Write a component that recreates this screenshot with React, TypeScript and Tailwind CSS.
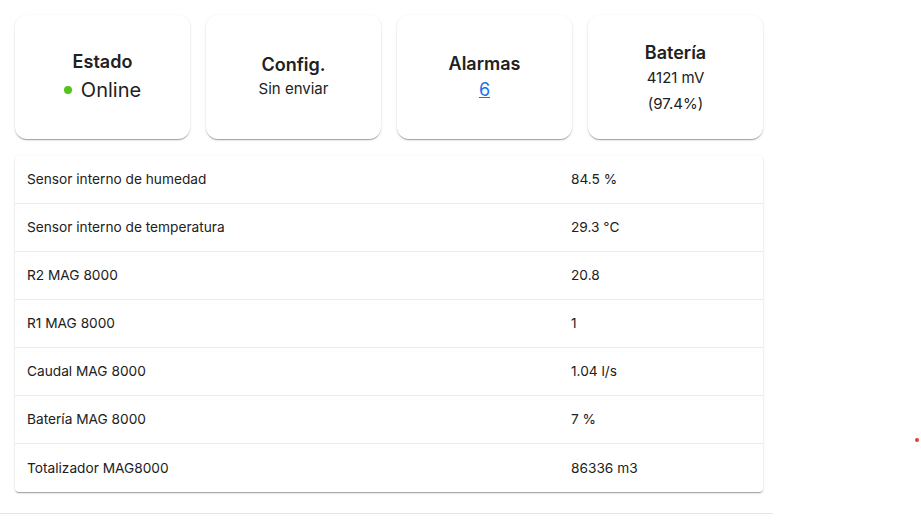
import React from "react";

const rows: [string, string][] = [
  ["Sensor interno de humedad", "84.5 %"],
  ["Sensor interno de temperatura", "29.3 °C"],
  ["R2 MAG 8000", "20.8"],
  ["R1 MAG 8000", "1"],
  ["Caudal MAG 8000", "1.04 l/s"],
  ["Batería MAG 8000", "7 %"],
  ["Totalizador MAG8000", "86336 m3"],
];

const card =
  "w-[175px] h-[124px] bg-white rounded-xl flex flex-col items-center justify-center shadow-[0_2px_1px_-1px_rgba(0,0,0,0.2),0_1px_1px_0_rgba(0,0,0,0.14),0_1px_3px_0_rgba(0,0,0,0.12)]";

export default function App() {
  return (
    <div className="relative w-[921px] h-[524px] bg-white text-[#212121] font-['Inter','Liberation_Sans',sans-serif]">
      <div className="w-[773px] pl-[15px] pt-[15px] pb-[21px] border-b border-[#e5e5e5]">
        <div className="flex gap-[16px]">
          <div className={card}>
            <div className="text-[18px] font-semibold leading-[24px] mt-[-2px]">Estado</div>
            <div className="flex items-center gap-[9px] mt-[3px]">
              <span className="w-[8px] h-[8px] rounded-full bg-[#52c41a]"></span>
              <span className="text-[20px] leading-[26px]">Online</span>
            </div>
          </div>
          <div className={card}>
            <div className="text-[18px] font-semibold leading-[24px] mt-[-3px]">Config.</div>
            <div className="text-[15px] leading-[20px] mt-[2px]">Sin enviar</div>
          </div>
          <div className={card}>
            <div className="text-[18px] font-semibold leading-[24px]">Alarmas</div>
            <a href="#" className="text-[18px] leading-[24px] text-[#1a73e8] underline mt-[2px]">6</a>
          </div>
          <div className={card}>
            <div className="text-[18px] font-semibold leading-[24px] mt-[3px]">Batería</div>
            <div className="text-[15px] leading-[26px] mt-[0px]">4121 mV</div>
            <div className="text-[15px] leading-[26px]">(97.4%)</div>
          </div>
        </div>
        <div className="mt-[17px] w-[748px] bg-white rounded-[4px] shadow-[0_2px_1px_-1px_rgba(0,0,0,0.2),0_1px_1px_0_rgba(0,0,0,0.14),0_1px_3px_0_rgba(0,0,0,0.12)]">
          {rows.map(([k, v], i) => (
            <div
              key={k}
              className={`grid grid-cols-[556px_1fr] h-[48px] items-center text-[13.7px] ${i < rows.length - 1 ? "border-b border-[#ebebeb]" : ""}`}
            >
              <div className="pl-[12px]">{k}</div>
              <div>{v}</div>
            </div>
          ))}
        </div>
      </div>
      <div className="absolute left-[915px] top-[438px] w-[4px] h-[4px] bg-[#e53935] rounded-full"></div>
    </div>
  );
}
